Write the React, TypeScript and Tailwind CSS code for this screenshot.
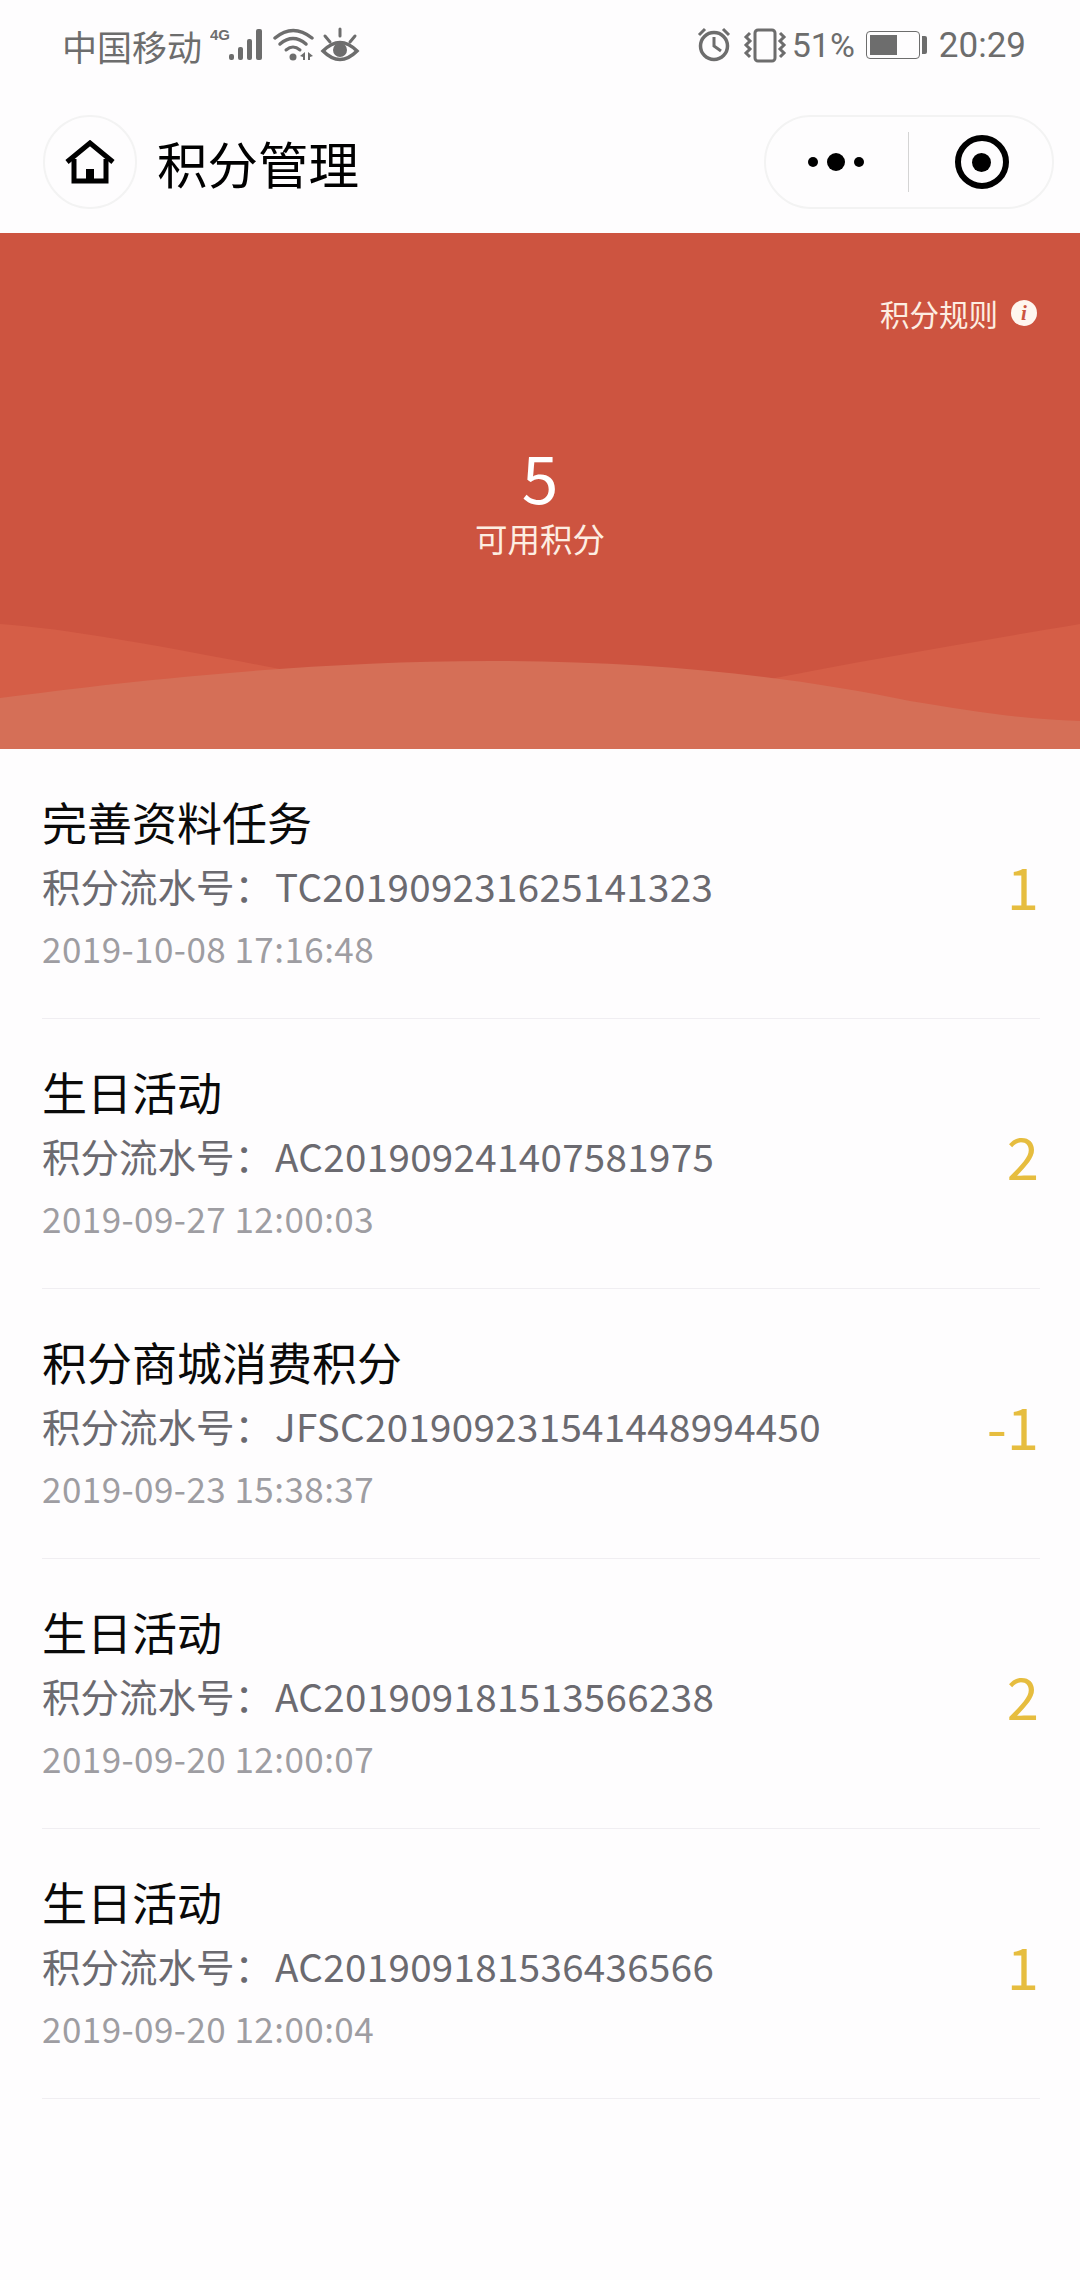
const FONT = "font-['Noto_Sans_CJK_SC','Noto_Sans',sans-serif]";

const rows = [
  { title: "完善资料任务", no: "TC201909231625141323", date: "2019-10-08 17:16:48", value: "1" },
  { title: "生日活动", no: "AC201909241407581975", date: "2019-09-27 12:00:03", value: "2" },
  { title: "积分商城消费积分", no: "JFSC201909231541448994450", date: "2019-09-23 15:38:37", value: "-1" },
  { title: "生日活动", no: "AC201909181513566238", date: "2019-09-20 12:00:07", value: "2" },
  { title: "生日活动", no: "AC201909181536436566", date: "2019-09-20 12:00:04", value: "1" },
];

function StatusBar() {
  return (
    <div className="h-[92px] pl-[62px] pr-[54px] pb-[2px] flex items-center justify-between text-[#6d6d6d]">
      <div className="flex items-center">
        <span className="text-[35px] leading-none">中国移动</span>
        <svg width="150" height="36" viewBox="0 0 150 36" className="ml-[8px]" fill="#6d6d6d">
          <text x="0" y="13" fontSize="15" fontWeight="700" fontFamily="Liberation Sans">4G</text>
          <rect x="19" y="27" width="5" height="6" rx="2" />
          <rect x="28" y="20" width="5" height="13" rx="2" />
          <rect x="37" y="12" width="5" height="21" rx="2" />
          <rect x="46" y="2" width="6" height="31" rx="2" />
          <path d="M65 11 Q83 -4 102 11" fill="none" stroke="#6d6d6d" strokeWidth="3.5" strokeLinecap="round" />
          <path d="M70 17 Q83 6 96 17" fill="none" stroke="#6d6d6d" strokeWidth="3.5" strokeLinecap="round" />
          <path d="M76 23 Q83 17 90 23" fill="none" stroke="#6d6d6d" strokeWidth="3" strokeLinecap="round" />
          <circle cx="83" cy="30" r="3.5" />
          <path d="M90 29 L95 25 V33 H93 V30 Z M98 25 V33 H100 V30 L103 29 Z" />
          <path d="M113 24 Q130 7 147 24 Q130 41 113 24Z" fill="none" stroke="#6d6d6d" strokeWidth="3.5" />
          <circle cx="130" cy="23" r="7" />
          <path d="M115 9 L120 15 M130 2 V9 M145 9 L140 15" stroke="#6d6d6d" strokeWidth="3" strokeLinecap="round" />
        </svg>
      </div>
      <div className="flex items-center">
        <svg width="95" height="36" viewBox="0 0 95 36" fill="none" stroke="#6d6d6d">
          <circle cx="17" cy="19" r="13.5" strokeWidth="3.5" />
          <path d="M17 10 V19 L24 24" strokeWidth="3" />
          <path d="M2 8 L8 2 M26 2 L32 8" strokeWidth="3" />
          <rect x="58" y="3" width="20" height="31" rx="3" strokeWidth="3" />
          <path d="M53 6 L49 10 L53 14 L49 18 L53 22 L49 26 L53 30 M83 6 L87 10 L83 14 L87 18 L83 22 L87 26 L83 30" strokeWidth="3" />
        </svg>
        <span className="text-[34px] leading-none font-['Roboto',sans-serif]">51%</span>
        <div className="ml-[11px] flex items-center">
          <div className="w-[54px] h-[28px] rounded-[4px] border border-[#6d6d6d] p-[3px]">
            <div className="w-[27px] h-full bg-[#6d6d6d]" />
          </div>
          <div className="ml-[2px] w-[5px] h-[18px] rounded-r-[2px] bg-[#6d6d6d]" />
        </div>
        <span className="ml-[12px] text-[35px] leading-none font-['Roboto',sans-serif]">20:29</span>
      </div>
    </div>
  );
}

function NavBar() {
  return (
    <div className="h-[141px] pl-[43px] pr-[26px] flex items-start justify-between pt-[23px]">
      <div className="flex items-center">
        <div className="w-[94px] h-[94px] rounded-full border-2 border-[#f3f3f3] flex items-center justify-center">
          <svg width="50" height="44" viewBox="0 0 50 44" fill="none">
            <path d="M2 22 L25 3 L48 22" stroke="#000" strokeWidth="5" strokeLinejoin="miter" />
            <path d="M9 19 V41 H41 V19" stroke="#000" strokeWidth="5" />
            <rect x="21" y="29" width="8" height="12" fill="#000" />
          </svg>
        </div>
        <h1 className="ml-[20px] text-[50.5px] leading-none text-black font-normal">积分管理</h1>
      </div>
      <div className="w-[290px] h-[94px] rounded-full border-2 border-[#f3f3f3] flex items-center">
        <div className="w-[140px] flex items-center justify-center gap-[9px]">
          <span className="w-[10px] h-[10px] rounded-full bg-black" />
          <span className="w-[18px] h-[18px] rounded-full bg-black" />
          <span className="w-[10px] h-[10px] rounded-full bg-black" />
        </div>
        <div className="ml-[2px] w-px h-[60px] bg-[#d4d4d4]" />
        <div className="flex-1 pl-[2px] flex items-center justify-center">
          <div className="w-[54px] h-[54px] rounded-full border-[6px] border-black flex items-center justify-center">
            <span className="w-[19px] h-[19px] rounded-full bg-black" />
          </div>
        </div>
      </div>
    </div>
  );
}

function Banner() {
  return (
    <div className="relative h-[516px] bg-[#cd5440] text-white overflow-hidden">
      <svg className="absolute left-0 bottom-0" width="1080" height="130" viewBox="0 0 1080 130" preserveAspectRatio="none">
        <path d="M0 5 C70 10 160 27 280 50 C420 67 600 72 760 62 C860 42 980 22 1080 5 V130 H0 Z" fill="#d55e47" />
        <path d="M0 79 C130 62 310 42 490 42 C650 42 790 57 910 82 C970 92 1020 100 1080 102 V130 H0 Z" fill="#d56f57" />
      </svg>
      <div className="relative flex flex-col">
        <div className="h-[160px] pr-[43px] pt-[58px] flex justify-end items-start">
          <div className="flex items-center">
            <span className="text-[29.5px] leading-[44px] text-[#fdeee2]">积分规则</span>
            <span className="ml-[13px] w-[26px] h-[26px] rounded-full bg-[#fff6ef] flex items-center justify-center text-[#cd5440] text-[21px] font-bold italic leading-none font-['Liberation_Serif',serif]">i</span>
          </div>
        </div>
        <div className="mt-[46px] flex flex-col items-center">
          <span className="text-[66px] leading-[72px] font-normal">5</span>
          <span className="mt-[5px] text-[32.5px] leading-[44px] text-[#fdeee2]">可用积分</span>
        </div>
      </div>
    </div>
  );
}

function Row({ title, no, date, value }: (typeof rows)[number]) {
  return (
    <div className="mx-[42px] w-[998px] pt-[43px] pb-[47px] border-b border-[#f0eef2] flex items-center justify-between">
      <div className="flex flex-col">
        <div className="text-[45px] leading-[60px] text-[#0a0a0a] font-normal">{title}</div>
        <div className="mt-[8px] text-[38.5px] leading-[50px] text-[#6b6a70] font-normal">
          积分流水号：<span className="ml-[2px] tracking-[0.35px]">{no}</span>
        </div>
        <div className="mt-[15px] text-[35px] leading-[46px] text-[#9e9da2] font-normal tracking-[0.45px]">{date}</div>
      </div>
      <div className="pr-[1px] pt-[6px] text-[58px] leading-none text-[#e6bd3f] font-normal">{value}</div>
    </div>
  );
}

export default function App() {
  return (
    <div className={`${FONT} w-[1080px] h-[2280px] bg-[#fefdfe] overflow-hidden`}>
      <StatusBar />
      <NavBar />
      <Banner />
      <div className="flex flex-col">
        {rows.map((r, i) => (
          <Row key={i} {...r} />
        ))}
      </div>
    </div>
  );
}
